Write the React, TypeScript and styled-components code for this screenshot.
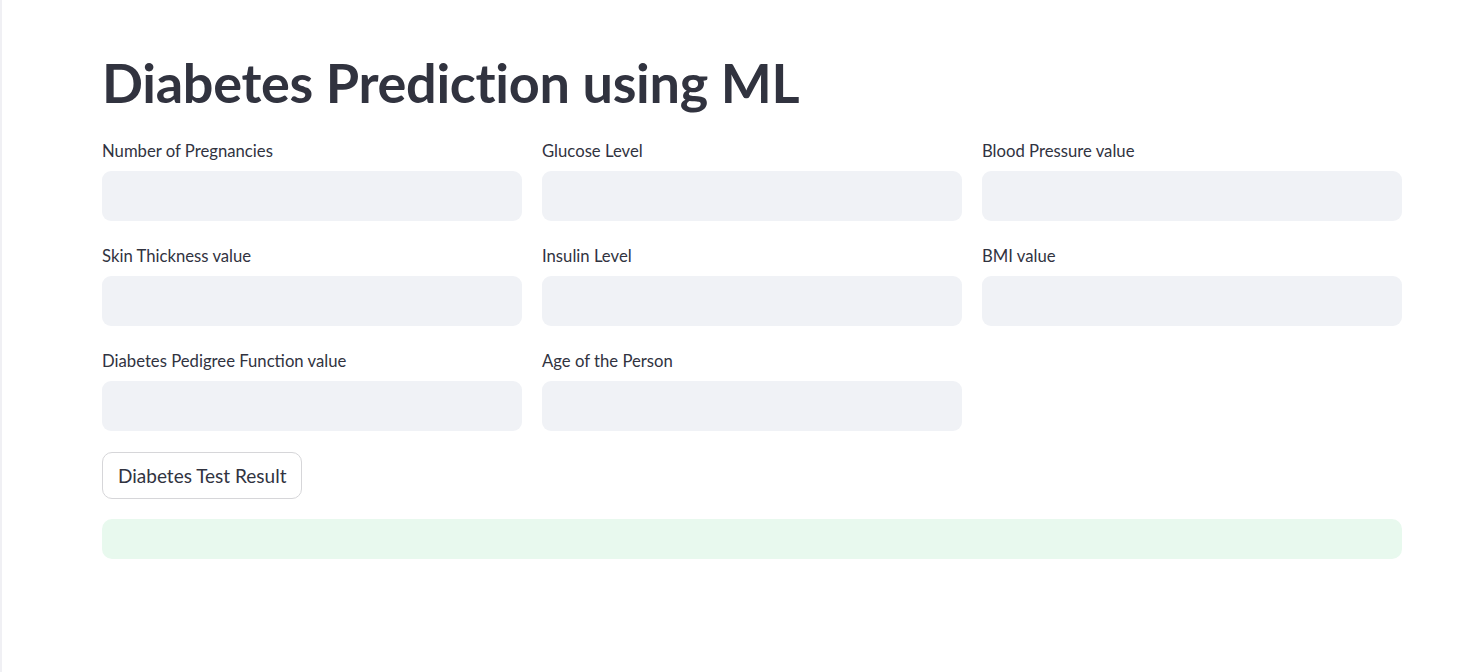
import React from "react";
import styled, { createGlobalStyle } from "styled-components";

const GlobalStyle = createGlobalStyle`
  html, body {
    margin: 0;
    padding: 0;
    background: #ffffff;
  }
  body {
    font-family: "Lato", "Liberation Sans", sans-serif;
    color: #31333f;
  }
`;

const Shell = styled.div`
  display: flex;
  min-height: 672px;
  background: #ffffff;
`;

const EdgeLine = styled.div`
  width: 2px;
  flex: 0 0 2px;
  background: #f0f0f4;
`;

const Main = styled.main`
  flex: 1;
  padding: 44px 58px 40px 100px;
  display: flex;
  flex-direction: column;
`;

const Title = styled.h1`
  margin: 0 0 17px 0;
  font-family: "Lato", "Liberation Sans", sans-serif;
  font-weight: 700;
  font-size: 54px;
  line-height: 78px;
  letter-spacing: -0.3px;
  color: #31333f;
`;

const Grid = styled.div`
  display: grid;
  grid-template-columns: repeat(3, 1fr);
  column-gap: 20px;
  row-gap: 23px;
`;

const Field = styled.div`
  display: flex;
  flex-direction: column;
  gap: 8px;
`;

const Label = styled.label`
  font-size: 16.7px;
  line-height: 24px;
  height: 24px;
  color: #31333f;
`;

const Input = styled.input`
  height: 50px;
  box-sizing: border-box;
  border: none;
  border-radius: 9px;
  background: #f0f2f6;
  outline: none;
  padding: 0 14px;
  font-family: inherit;
  font-size: 17px;
  color: #31333f;
`;

const Button = styled.button`
  align-self: flex-start;
  margin-top: 21px;
  height: 47px;
  padding: 0 15px;
  box-sizing: border-box;
  border: 1px solid #d6d6d9;
  border-radius: 10px;
  background: #ffffff;
  color: #31333f;
  font-family: inherit;
  font-size: 19px;
  cursor: pointer;
`;

const Alert = styled.div`
  margin-top: 20px;
  height: 40px;
  border-radius: 10px;
  background: #e8f9ee;
`;

const fields = [
  "Number of Pregnancies",
  "Glucose Level",
  "Blood Pressure value",
  "Skin Thickness value",
  "Insulin Level",
  "BMI value",
  "Diabetes Pedigree Function value",
  "Age of the Person",
];

export default function App() {
  return (
    <>
      <GlobalStyle />
      <Shell>
        <EdgeLine />
        <Main>
          <Title>Diabetes Prediction using ML</Title>
          <Grid>
            {fields.map((f) => (
              <Field key={f}>
                <Label>{f}</Label>
                <Input type="text" aria-label={f} />
              </Field>
            ))}
          </Grid>
          <Button>Diabetes Test Result</Button>
          <Alert />
        </Main>
      </Shell>
    </>
  );
}
